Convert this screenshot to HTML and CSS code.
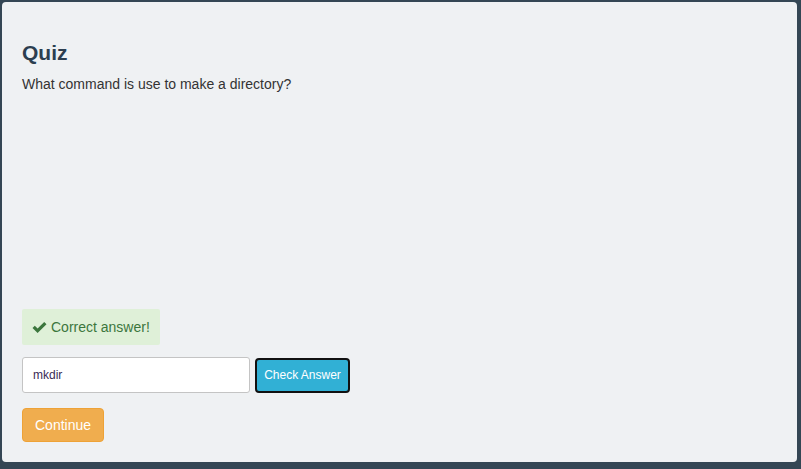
FILE: index.html
```html
<!DOCTYPE html>
<html>
<head>
<meta charset="utf-8">
<link rel="stylesheet" href="styles.css">
</head>
<body>
<div class="panel">
  <div class="question">
    <h3 class="title">Quiz</h3>
    <p class="prompt">What command is use to make a directory?</p>
  </div>
  <div class="alert">
    <svg class="check" width="15" height="13" viewBox="0 0 15 13"><path d="M0.5 7 L2.8 4.7 L5.6 7.5 L12.2 0.9 L14.5 3.2 L5.6 12.1 Z" fill="#3c763d"/></svg>
    <span>Correct answer!</span>
  </div>
  <div class="answer-row">
    <input class="answer" type="text" value="mkdir">
    <button class="btn btn-check">Check Answer</button>
  </div>
  <button class="btn btn-continue">Continue</button>
</div>
</body>
</html>
```
FILE: styles.css
```css
html, body {
  margin: 0;
  padding: 0;
  background: #344654;
  font-family: "Liberation Sans", Arial, sans-serif;
}
body {
  padding: 2px;
  width: 795px;
}
.panel {
  box-sizing: border-box;
  width: 795px;
  height: 460px;
  background: #eff1f3;
  border-radius: 4px;
  padding: 20px;
  display: flex;
  flex-direction: column;
  align-items: flex-start;
}
.question {
  height: 290px;
}
.title {
  margin: 20px 0 10px;
  font-size: 21px;
  line-height: 22px;
  font-weight: bold;
  color: #2c3e50;
}
.prompt {
  margin: 0;
  font-size: 14px;
  line-height: 20px;
  color: #333;
}
.alert {
  background: #dff0d8;
  color: #3c763d;
  font-size: 14px;
  line-height: 20px;
  padding: 8px 10px;
  border-radius: 2px;
  display: flex;
  align-items: center;
  gap: 4px;
}
.check {
  display: block;
}
.answer-row {
  margin-top: 12px;
  display: flex;
  align-items: center;
  gap: 5px;
}
.answer {
  box-sizing: border-box;
  width: 228px;
  height: 36px;
  border: 1px solid #c4c4c4;
  border-radius: 3px;
  background: #fff;
  padding: 0 10px;
  font-family: "Liberation Sans", Arial, sans-serif;
  font-size: 12px;
  color: #3a2b55;
  outline: none;
}
.btn {
  font-family: "Liberation Sans", Arial, sans-serif;
  color: #fff;
  border-radius: 4px;
  cursor: pointer;
}
.btn-check {
  box-sizing: border-box;
  height: 35px;
  width: 95px;
  background: #31b0d5;
  border: 2px solid #111;
  font-size: 12px;
  padding: 0 7px;
}
.btn-continue {
  margin-top: 15px;
  box-sizing: border-box;
  height: 34px;
  width: 82px;
  background: #f0ad4e;
  border: 1px solid #eea236;
  font-size: 14px;
  padding: 0 12px;
}
```
